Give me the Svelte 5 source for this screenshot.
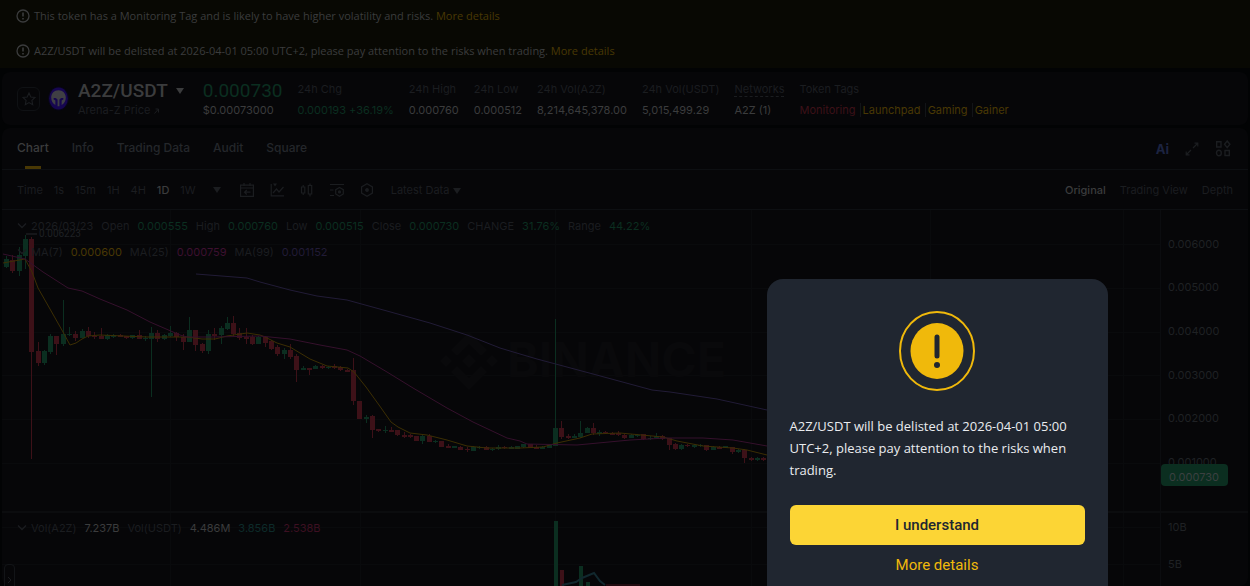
<script lang="ts">
	type Candle = [number, number, number, number, number];

	const notices = [
		'This token has a Monitoring Tag and is likely to have higher volatility and risks.',
		'A2Z/USDT will be delisted at 2026-04-01 05:00 UTC+2, please pay attention to the risks when trading.'
	];

	const stats = [
		{ label: '24h High', value: '0.000760' },
		{ label: '24h Low', value: '0.000512' },
		{ label: '24h Vol(A2Z)', value: '8,214,645,378.00' },
		{ label: '24h Vol(USDT)', value: '5,015,499.29' }
	];

	const tabs = ['Chart', 'Info', 'Trading Data', 'Audit', 'Square'];
	const intervals = ['Time', '1s', '15m', '1H', '4H', '1D', '1W'];
	const views = ['Original', 'Trading View', 'Depth'];

	const ohlc = [
		['Open', '0.000555'],
		['High', '0.000760'],
		['Low', '0.000515'],
		['Close', '0.000730'],
		['CHANGE', '31.76%'],
		['Range', '44.22%']
	];

	const averages = [
		['MA(7)', '0.000600', 'ma7'],
		['MA(25)', '0.000759', 'ma25'],
		['MA(99)', '0.001152', 'ma99']
	];

	const ma7 =
		'1,53 23,49 30,62 36,78 48,99 61,122 68,135 74,133 80,129 86,126 98,125 145,127 185,127 200,129 213,129 225,126 245,123 258,125 263,127 275,133 288,137 308,149 325,156 346,158 352,162 364,177 377,195 389,212 396,217 408,223 425,225 445,230 465,236 485,238 518,238 541,237 555,233 578,228 590,224 618,223 661,227 675,231 701,236 731,238 745,240 765,245';
	const ma25 =
		'1,44 23,49 41,62 66,78 80,81 98,89 125,100 148,112 178,125 185,127 211,127 258,126 288,129 318,135 345,140 358,146 385,162 411,178 445,198 471,212 505,228 518,231 525,234 575,235 628,230 665,228 701,228 731,230 765,236';
	const ma99 =
		'194,64 245,68 258,72 288,80 315,86 345,90 385,101 428,113 465,125 498,138 518,144 535,149 591,164 650,180 668,182 715,189 765,200';

	const gridRows = [34, 78, 122, 165, 209, 253, 317, 354];
	const gridCols = [168, 358, 553, 749, 928, 1121];
	const ticks = [
		['0.006000', 38],
		['0.005000', 81],
		['0.004000', 125],
		['0.003000', 169],
		['0.002000', 212],
		['0.001000', 256],
		['10B', 321],
		['5B', 358]
	];

	// direction (1 = up), body top, body bottom, wick top, wick bottom
	const candles: Candle[] = [
		[1, 49, 57, 46, 58],
		[0, 50, 61, 45, 63],
		[1, 45, 61, 37, 66],
		[1, 29, 46, 25, 59],
		[0, 29, 142, 27, 249],
		[0, 141, 153, 132, 156],
		[1, 141, 153, 140, 155],
		[1, 126, 142, 124, 144],
		[0, 126, 134, 126, 145],
		[1, 124, 134, 90, 136],
		[1, 124, 125, 117, 126],
		[0, 124, 128, 121, 131],
		[1, 121, 128, 119, 128],
		[0, 121, 126, 117, 128],
		[0, 126, 127, 122, 129],
		[0, 126, 129, 118, 129],
		[1, 125, 129, 124, 130],
		[1, 125, 127, 124, 128],
		[0, 125, 127, 124, 127],
		[0, 126, 128, 126, 129],
		[1, 125, 128, 125, 129],
		[0, 125, 129, 120, 129],
		[1, 128, 129, 126, 131],
		[1, 123, 129, 117, 187],
		[0, 123, 129, 120, 132],
		[1, 125, 129, 124, 130],
		[1, 123, 126, 116, 127],
		[0, 123, 127, 122, 131],
		[0, 127, 132, 124, 140],
		[1, 120, 132, 107, 132],
		[0, 120, 135, 120, 141],
		[0, 134, 141, 133, 143],
		[1, 124, 141, 120, 144],
		[0, 124, 126, 118, 130],
		[1, 118, 125, 116, 134],
		[1, 113, 119, 107, 120],
		[0, 113, 124, 106, 126],
		[0, 123, 128, 118, 130],
		[0, 127, 129, 118, 134],
		[0, 127, 134, 125, 135],
		[1, 127, 134, 126, 134],
		[0, 127, 133, 126, 137],
		[0, 131, 139, 130, 140],
		[0, 137, 144, 135, 146],
		[1, 140, 144, 138, 149],
		[0, 140, 147, 134, 149],
		[0, 146, 160, 144, 172],
		[1, 158, 160, 156, 160],
		[0, 158, 160, 158, 165],
		[1, 156, 159, 155, 159],
		[0, 156, 158, 155, 159],
		[1, 157, 158, 156, 159],
		[0, 156, 158, 154, 159],
		[0, 157, 160, 156, 161],
		[0, 160, 162, 159, 162],
		[0, 160, 191, 148, 195],
		[0, 191, 209, 191, 209],
		[1, 207, 209, 205, 213],
		[0, 206, 220, 205, 228],
		[0, 219, 221, 219, 222],
		[1, 220, 221, 216, 223],
		[0, 220, 222, 217, 222],
		[0, 220, 225, 220, 226],
		[0, 225, 227, 222, 228],
		[0, 225, 227, 224, 228],
		[0, 226, 231, 226, 231],
		[1, 226, 231, 225, 234],
		[0, 226, 232, 224, 232],
		[1, 231, 232, 230, 233],
		[0, 231, 237, 231, 237],
		[0, 236, 238, 234, 238],
		[1, 236, 238, 236, 238],
		[0, 237, 240, 236, 240],
		[0, 239, 240, 237, 242],
		[1, 237, 241, 236, 241],
		[1, 237, 238, 236, 239],
		[0, 237, 240, 236, 240],
		[1, 239, 240, 238, 241],
		[1, 237, 239, 235, 240],
		[0, 237, 238, 236, 239],
		[1, 237, 239, 236, 239],
		[1, 236, 239, 236, 239],
		[1, 234, 237, 234, 238],
		[0, 234, 238, 234, 238],
		[0, 237, 239, 235, 239],
		[1, 237, 239, 236, 239],
		[1, 235, 238, 235, 238],
		[1, 218, 236, 109, 236],
		[0, 218, 227, 211, 229],
		[0, 226, 228, 224, 229],
		[1, 226, 228, 224, 228],
		[1, 223, 227, 211, 228],
		[1, 218, 223, 217, 223],
		[0, 218, 223, 213, 225],
		[1, 222, 224, 220, 226],
		[0, 222, 223, 221, 224],
		[0, 223, 225, 222, 225],
		[0, 223, 225, 221, 226],
		[0, 225, 228, 224, 229],
		[1, 225, 228, 224, 228],
		[1, 225, 226, 224, 227],
		[0, 224, 229, 224, 230],
		[1, 228, 229, 226, 230],
		[1, 226, 228, 223, 228],
		[0, 226, 229, 225, 230],
		[0, 228, 235, 228, 240],
		[0, 234, 239, 233, 240],
		[1, 235, 239, 234, 240],
		[0, 235, 236, 234, 237],
		[1, 235, 237, 234, 238],
		[1, 235, 236, 234, 237],
		[0, 235, 240, 235, 241],
		[1, 237, 240, 236, 240],
		[0, 237, 239, 236, 239],
		[1, 236, 238, 236, 238],
		[0, 237, 242, 237, 244],
		[1, 240, 242, 239, 243],
		[0, 240, 248, 239, 253],
		[0, 248, 250, 247, 251],
		[1, 248, 250, 247, 251],
		[0, 248, 250, 247, 251]
	];

	const candleX = (i: number) => 4 + Math.round(i * 6.31);

	let activeTab = $state('Chart');
	let activeInterval = $state('1D');
	let activeView = $state('Original');
	let dialogOpen = $state(true);
</script>

{#snippet caret()}
	<svg width="8" height="6" viewBox="0 0 8 6"><path d="M0 0h8L4 6z" fill="currentColor" /></svg>
{/snippet}

{#snippet chevron()}
	<svg class="chevron" width="10" height="6" viewBox="0 0 10 6" fill="none" stroke="currentColor" stroke-width="1.3"><path d="M1 .5l4 4 4-4" /></svg>
{/snippet}

<div class="page">
	<div class="notices">
		{#each notices as notice}
			<p class="notice">
				<svg width="14" height="14" viewBox="0 0 14 14" fill="none" stroke="currentColor" stroke-width="1.3">
					<circle cx="7" cy="7" r="6" /><path d="M7 3.5v4M7 9v1.4" stroke-width="1.6" />
				</svg>
				<span>{notice} <a href="#details">More details</a></span>
			</p>
		{/each}
	</div>

	<header class="card ticker">
		<button class="star" aria-label="Add to favorites">
			<svg width="14" height="14" viewBox="0 0 14 14" fill="none" stroke="currentColor" stroke-width="1.1">
				<path d="M7 1l1.8 4 4.2.5-3.1 2.9.8 4.3L7 10.6l-3.7 2.1.8-4.3L1 5.5 5.200 5z" />
			</svg>
		</button>
		<svg class="coin" width="21" height="25" viewBox="0 0 20 24">
			<ellipse cx="10" cy="12" rx="10" ry="11.500" fill="#080618" />
			<ellipse cx="10" cy="12" rx="9" ry="10.500" fill="#160650" />
			<path d="M10 4C5.800 4 3 7 3 11c0 3.300 1.500 5.800 4 7.200v-4.400L5.200 12.600c-.4-1.800 3.200-1.300 3.900.6V19.500h1.800v-6.300c.7-1.900 4.300-2.400 3.900-.6L13 13.800v4.400c2.500-1.400 4-3.900 4-7.200 0-4-2.800-7-7-7z" fill="#3f3f44" />
		</svg>
		<div class="pair">
			<h1>A2Z/USDT {@render caret()}</h1>
			<a href="#price">Arena-Z Price
				<svg width="5" height="6" viewBox="0 0 5 6" fill="none" stroke="currentColor"><path d="M.5 5.500l4-4.500M1.500 1h3v3.500" /></svg>
			</a>
		</div>
		<div class="last">
			<strong>0.000730</strong>
			<span>$0.00073000</span>
		</div>
		<dl>
			<div class="change">
				<dt>24h Chg</dt>
				<dd class="up">0.000193 +36.19%</dd>
			</div>
			{#each stats as stat}
				<div>
					<dt>{stat.label}</dt>
					<dd>{stat.value}</dd>
				</div>
			{/each}
			<div>
				<dt><span class="dashed">Networks</span></dt>
				<dd>A2Z (1)</dd>
			</div>
			<div>
				<dt>Token Tags</dt>
				<dd class="tags">
					<a class="risk" href="#monitoring">Monitoring</a>
					<a href="#launchpad">Launchpad</a>
					<a href="#gaming">Gaming</a>
					<a href="#gainer">Gainer</a>
				</dd>
			</div>
		</dl>
	</header>

	<main class="card">
		<nav>
			{#each tabs as tab}
				<button class:active={activeTab === tab} onclick={() => (activeTab = tab)}>{tab}</button>
			{/each}
			<div class="tools">
				<button class="ai" aria-label="AI summary">Ai</button>
				<button aria-label="Expand">
					<svg width="14" height="14" viewBox="0 0 14 14" fill="none" stroke="currentColor" stroke-width="1.2"><path d="M8 6l4.500-4.500M9.500 1.200h3.300v3.300M6 8l-4.500 4.500M1.200 9.500v3.300h3.300" /></svg>
				</button>
				<button aria-label="Layout">
					<svg width="16" height="17" viewBox="0 0 16 17" fill="none" stroke="currentColor" stroke-width="1.400"><path d="M1.700 1.700h4.300v5.300H1.700zM10 10.500h4.300v5H10zM12.200 1l2.700 3.300-2.700 3.300-2.700-3.300z" /><ellipse cx="3.900" cy="13" rx="2.400" ry="2.800" /></svg>
				</button>
			</div>
		</nav>

		<div class="toolbar">
			{#each intervals as interval}
				<button class:active={activeInterval === interval} onclick={() => (activeInterval = interval)}>{interval}</button>
			{/each}
			<div class="icons">
				<button class="more" aria-label="More intervals">{@render caret()}</button>
				<button aria-label="Go to date">
					<svg width="14" height="14" viewBox="0 0 14 14" fill="none" stroke="currentColor" stroke-width="1.200"><path d="M.6 2.200h12.800v11.200H.6zM.6 5h12.800M4 0v3M10 0v3M10.500 9.200H4.500M6.800 7L4.500 9.200l2.300 2.300" /></svg>
				</button>
				<button aria-label="Indicators">
					<svg width="14" height="14" viewBox="0 0 14 14" fill="none" stroke="currentColor" stroke-width="1.200"><path d="M1.200 1v11.800H14M3 10l3.500-4 2.500 3 4.500-5" /><path d="M3 .5h4L5 3.500z" fill="currentColor" stroke="none" /></svg>
				</button>
				<button aria-label="Chart style">
					<svg width="14" height="14" viewBox="0 0 14 14" fill="none" stroke="currentColor" stroke-width="1.200"><path d="M1.500 4h3.300v6H1.500zM3.200 2v2M3.200 10v2M8.300 2.500h3.400v8.500H8.300zM10 .5v2M10 11v2.500" /></svg>
				</button>
				<button aria-label="Technical settings">
					<svg width="14" height="14" viewBox="0 0 14 14" fill="none" stroke="currentColor" stroke-width="1.200"><path d="M0 1.500h14M0 7h3.500M0 12.500h4M9.500 4.500l3.800 2.200v4.200L9.500 13.200 5.700 10.900V6.700z" /><circle cx="9.500" cy="8.900" r="1" fill="currentColor" /></svg>
				</button>
				<button aria-label="Chart settings">
					<svg width="14" height="14" viewBox="0 0 14 14" fill="none" stroke="currentColor" stroke-width="1.200"><path d="M7 .8l5.400 3.100v6.200L7 13.200l-5.400-3.100V3.900z" /><circle cx="7" cy="7" r="1.300" fill="currentColor" /></svg>
				</button>
			</div>
			<button class="latest">Latest Data {@render caret()}</button>
			<div class="views">
				{#each views as view}
					<button class:active={activeView === view} onclick={() => (activeView = view)}>{view}</button>
				{/each}
			</div>
		</div>

		<div class="chart">
			<svg class="plot" width="100%" height="376">
				{#each gridRows as y}
					<line class="grid" x1="0" x2="100%" y1={y + 0.5} y2={y + 0.5} />
				{/each}
				{#each gridCols as x}
					<line class="grid" x1={x + 0.5} x2={x + 0.5} y1="0" y2="376" />
				{/each}
				<line class="divider" x1="0" x2="100%" y1="302" y2="302" />

				<g class="watermark">
					<path d="M467 122l18 18-6 6-12-12-12 12-6-6zM467 180l18-18-6-6-12 12-12-12-6 6zM444 145l6 6-6 6-6-6zM467 144l7 7-7 7-7-7zM490 145l6 6-6 6-6-6z" />
					<text x="505" y="167">BINANCE</text>
				</g>

				{#each candles as [up, top, bottom, high, low], i}
					<g class={up ? 'rise' : 'fall'}>
						<rect x={candleX(i)} y={high} width="1" height={low - high} />
						<rect x={candleX(i) - 2} y={top} width="5" height={bottom - top} />
					</g>
				{/each}

				<polyline class="line ma7" points={ma7} />
				<polyline class="line ma25" points={ma25} />
				<polyline class="line ma99" points={ma99} />

				<path class="peak" d="M24 24h11" />
				<text class="peak-label" x="37" y="27">0.006223</text>

				<g class="rise"><rect x="552" y="311" width="4" height="65" /><rect x="577" y="356" width="4" height="20" /><rect x="584" y="372" width="4" height="4" /></g>
				<g class="fall"><rect x="558" y="360" width="4" height="16" /></g>
				<path class="volume" d="M560 375l14-3 6-4 12-5 6 8 5 4" />
				<path class="volume-low" d="M604 375h34" />
			</svg>

			<svg class="axis" width="87" height="376">
				{#each ticks as [label, y]}
					<text x="7" {y}>{label}</text>
				{/each}
				<line class="divider" x1="0" x2="87" y1="302" y2="302" />
				<rect x="0" y="254" width="67" height="22" rx="4" />
				<text class="current" x="8" y="271">0.000730</text>
			</svg>

			<div class="legend">
				{@render chevron()}
				<span>2026/03/23</span>
				{#each ohlc as [label, value]}
					<span>{label}</span><span class="up">{value}</span>
				{/each}
			</div>
			<div class="legend averages">
				{@render chevron()}
				{#each averages as [label, value, name]}
					<span>{label}</span><span class={name}>{value}</span>
				{/each}
			</div>
			<div class="legend volumes">
				{@render chevron()}
				<span>Vol(A2Z)</span><span class="bright">7.237B</span>
				<span>Vol(USDT)</span><span class="bright">4.486M</span>
				<span class="buy">3.856B</span><span class="sell">2.538B</span>
			</div>
			<button class="drawer" aria-label="Open drawing tools">
				<svg width="5" height="8" viewBox="0 0 5 8" fill="none" stroke="currentColor"><path d="M1 1l3 3-3 3" /></svg>
			</button>
		</div>
	</main>
</div>

{#if dialogOpen}
	<div class="dialog" role="dialog" aria-modal="true" aria-labelledby="warning">
		<svg class="alert" width="76" height="80" viewBox="0 0 76 80">
			<ellipse cx="38" cy="40" rx="37" ry="39" fill="none" stroke="#f0b90b" stroke-width="2" />
			<ellipse cx="38" cy="40" rx="26.500" ry="28" fill="#f0b90b" />
			<path d="M38 26v19" stroke="#202630" stroke-width="5" stroke-linecap="round" />
			<circle cx="38" cy="54" r="3" fill="#202630" />
		</svg>
		<p id="warning">{notices[1]}</p>
		<button class="confirm" onclick={() => (dialogOpen = false)}>I understand</button>
		<a href="#details">More details</a>
	</div>
{/if}

<style>
	:global(body) {
		background: #020304;
		overflow: hidden;
	}

	.page,
	.dialog {
		font-family: Inter, 'Liberation Sans', sans-serif;
		font-size: 11px;
		line-height: 16px;
	}

	.page {
		color: #1b1d20;
	}

	button {
		padding: 0;
		border: 0;
		background: none;
		color: inherit;
		font: inherit;
		cursor: pointer;
	}

	svg {
		flex: none;
	}

	a {
		color: #493804;
		text-decoration: none;
	}

	.up {
		color: #0b2e20;
	}

	.notices {
		height: 68px;
		background: #080803;
		color: #3b3c3d;
	}

	.notices,
	.dialog p {
		font-family: 'Open Sans', 'Liberation Sans', sans-serif;
	}

	.notice {
		display: flex;
		align-items: center;
		gap: 4px;
		height: 32px;
		margin: 0;
		padding-left: 16px;
	}

	.notice + .notice {
		padding-top: 3px;
	}

	.card {
		margin: 4px 2px 0;
		border-radius: 8px;
		background: #060608;
	}

	.ticker {
		display: flex;
		align-items: center;
		height: 53px;
		padding: 0 15px;
		white-space: nowrap;
	}

	.card + .card {
		margin-top: 3px;
	}

	.star {
		display: grid;
		place-items: center;
		width: 23px;
		height: 24px;
		border: 1px solid #0f1114;
		border-radius: 6px;
		box-sizing: border-box;
	}

	.coin {
		margin: 0 9px 0 8px;
	}

	h1 {
		display: flex;
		align-items: center;
		gap: 8px;
		margin: 0;
		color: #3b3c3d;
	}

	h1,
	.last strong {
		font-family: Roboto, 'Liberation Sans', sans-serif;
		font-size: 19px;
		font-weight: 500;
		line-height: 23px;
	}

	.pair a {
		display: block;
		color: #1b1d20;
	}

	.last {
		margin-left: 19px;
		color: #3b3c3d;
	}

	.last strong {
		display: block;
		color: #0b2e20;
		font-weight: 400;
	}

	dl {
		display: flex;
		gap: 15px;
		margin: 2px 0 0 15px;
	}

	dt {
		margin-bottom: 5px;
	}

	dd {
		margin: 0;
		color: #3b3c3d;
	}

	dd.up {
		color: #0b2e20;
	}

	.dashed {
		border-bottom: 1px dashed #1b1d20;
	}

	.tags a + a {
		margin-left: 1px;
		padding-left: 2px;
		border-left: 1px solid #121417;
	}

	.tags .risk {
		color: #3d1118;
	}

	nav,
	.toolbar {
		display: flex;
		align-items: center;
		padding: 0 15px;
		border-bottom: 1px solid #0d0f12;
	}

	nav {
		gap: 23px;
		height: 41px;
		font-size: 12px;
		font-weight: 500;
	}

	nav > button {
		position: relative;
		height: 41px;
		padding-bottom: 2px;
		color: #24272b;
	}

	nav > .active,
	.active {
		color: #3b3c3d;
		font-weight: 500;
	}

	nav > .active::after {
		content: '';
		position: absolute;
		bottom: 0;
		left: calc(50% - 8px);
		width: 16px;
		height: 3px;
		background: #493804;
	}

	.tools,
	.views {
		display: flex;
		align-items: center;
		margin-left: auto;
	}

	.tools {
		gap: 16px;
		padding-right: 2px;
	}

	.ai {
		color: #1c2340;
		font-size: 13px;
		font-weight: 700;
	}

	.toolbar {
		gap: 11px;
		height: 39px;
	}

	.icons {
		display: flex;
		align-items: center;
		gap: 16px;
		margin-left: 6px;
	}

	.icons svg,
	.tools svg {
		display: block;
	}

	.more {
		margin-right: 3px;
	}

	.latest {
		margin-left: 6px;
	}

	.views {
		gap: 14px;
	}

	.chart {
		position: relative;
		display: flex;
		height: 376px;
		overflow: hidden;
	}

	.plot {
		flex: 1;
		min-width: 0;
	}

	.axis {
		border-left: 1px solid #0b0c0f;
	}

	.axis text,
	.peak-label {
		fill: #1f2124;
	}

	.peak-label {
		font-family: Roboto, sans-serif;
		font-size: 10px;
	}

	.axis rect {
		fill: #0b2e20;
	}

	.axis .current {
		fill: #3b4040;
	}

	.grid {
		stroke: #090a0c;
	}

	.divider {
		stroke: #0b0c0e;
		stroke-width: 2;
	}

	.watermark {
		fill: #09090b;
		font: 700 48px Inter, sans-serif;
	}

	.rise {
		fill: #0b2e20;
	}

	.fall {
		fill: #3d1118;
	}

	.line {
		fill: none;
	}

	.line.ma7 {
		stroke: #3c2e03;
	}

	.line.ma25 {
		stroke: #35102c;
	}

	.line.ma99 {
		stroke: #211b36;
	}

	.peak {
		stroke: #24272b;
	}

	.volume {
		fill: none;
		stroke: #11282e;
		stroke-width: 2;
	}

	.volume-low {
		stroke: #3d1118;
	}

	.legend {
		position: absolute;
		top: 8px;
		left: 15px;
		display: flex;
		align-items: center;
		gap: 8px;
		white-space: nowrap;
	}

	.chevron {
		margin-right: -4px;
	}

	.averages {
		top: 34px;
	}

	.volumes {
		top: 310px;
	}

	.legend .ma7 {
		color: #493804;
	}

	.legend .ma25 {
		color: #3d1030;
	}

	.legend .ma99 {
		color: #211b36;
	}

	.bright {
		color: #3b3c3d;
	}

	.buy {
		color: #0d2b2a;
	}

	.sell {
		color: #3d1022;
	}

	.drawer {
		position: absolute;
		top: 354px;
		left: 2px;
		width: 11px;
		height: 32px;
		border: 1px solid #121417;
		border-radius: 4px;
	}

	.dialog {
		position: fixed;
		top: 279px;
		left: 75%;
		display: flex;
		flex-direction: column;
		width: 341px;
		margin-left: -171px;
		padding: 32px 23px;
		border-radius: 16px;
		box-sizing: border-box;
		background: #202630;
		color: #eaecef;
		font-size: 13px;
		line-height: 22px;
	}

	.alert {
		align-self: center;
	}

	.dialog p {
		margin: 24px 0;
	}

	.confirm,
	.dialog a {
		font-family: Roboto, 'Liberation Sans', sans-serif;
		font-size: 15px;
	}

	.confirm {
		height: 40px;
		border-radius: 6px;
		background: #fcd535;
		color: #202630;
		font-weight: 500;
	}

	.dialog a {
		margin-top: 9px;
		color: #f0b90b;
		text-align: center;
	}
</style>
